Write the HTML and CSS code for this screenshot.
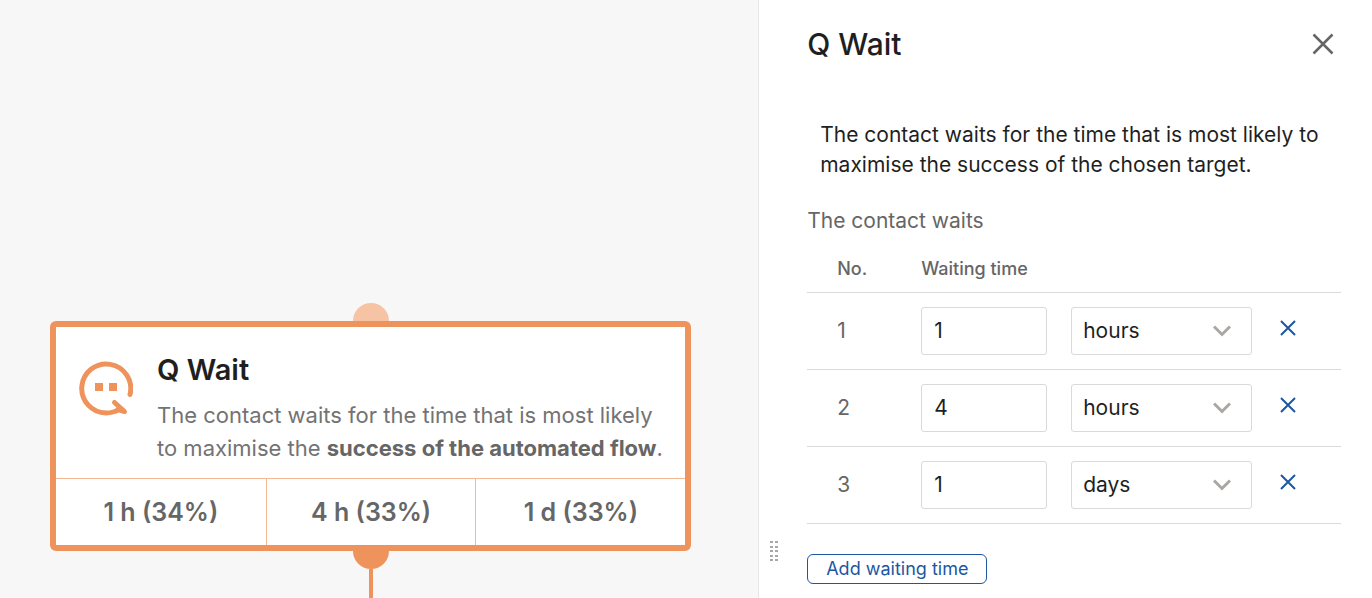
FILE: index.html
```html
<!DOCTYPE html>
<html lang="en">

<head>
    <meta charset="UTF-8">
    <title>Q Wait</title>
    <link rel="stylesheet" href="styles.css">
</head>

<body>
    <div class="editor">
        <!-- flow canvas with the selected node -->
        <main class="canvas">
            <div class="port port-in"></div>
            <section class="node">
                <div class="node-main">
                    <svg class="node-icon" viewBox="0 0 54 56" fill="none" stroke="#ee935c" stroke-width="5" stroke-linecap="round" stroke-linejoin="round">
                        <path d="M51 33.500A24.500 24.500 0 1 0 27 52C32 52 37 50.500 41 48" />
                        <path d="M35.500 41.500L45.500 50.500L39 48.500" />
                        <path d="M16 22h8v8h-8zM30 22h8v8h-8z" fill="#ee935c" stroke="none" />
                    </svg>
                    <div>
                        <h2>Q Wait</h2>
                        <p>The contact waits for the time that is most likely to maximise the <strong>success of the automated flow</strong>.</p>
                    </div>
                </div>
                <div class="node-split">
                    <span>1 h (34%)</span>
                    <span>4 h (33%)</span>
                    <span>1 d (33%)</span>
                </div>
            </section>
            <div class="port port-out"></div>
            <div class="wire"></div>
        </main>

        <!-- settings of the selected node -->
        <aside class="panel">
            <div class="gutter">
                <button type="button" class="grip" aria-label="Resize panel">
                    <svg width="8" height="21" viewBox="0 0 8 21" fill="#aaa6a4">
                        <path d="M0 0h3v2H0zM5 0h3v2H5zM0 5h3v2H0zM5 5h3v2H5zM0 9h3v2H0zM5 9h3v2H5zM0 14h3v2H0zM5 14h3v2H5zM0 18h3v2H0zM5 18h3v2H5z" />
                    </svg>
                </button>
            </div>
            <div class="settings">
                <header class="panel-header">
                    <h1>Q Wait</h1>
                    <button type="button" class="close" aria-label="Close">
                        <svg width="22" height="22" viewBox="0 0 22 22" stroke="#666" stroke-width="2.500"><path d="M1.500 1.500l19 19M20.500 1.500l-19 19" /></svg>
                    </button>
                </header>
                <p class="intro">The contact waits for the time that is most likely to maximise the success of the chosen target.</p>
                <h3>The contact waits</h3>
                <table>
                    <thead>
                        <tr>
                            <th class="col-no">No.</th>
                            <th class="col-value">Waiting time</th>
                            <th class="col-unit"></th>
                            <th></th>
                        </tr>
                    </thead>
                    <tbody>
                        <tr>
                            <td class="col-no">1</td>
                            <td><input type="text" value="1" aria-label="Waiting time 1"></td>
                            <td>
                                <div class="select">
                                    <select aria-label="Unit 1"><option>hours</option><option>days</option></select>
                                    <svg width="18" height="12" viewBox="0 0 18 12" fill="none" stroke="#aaa6a4" stroke-width="3"><path d="M1 1.500l8 8 8-8" /></svg>
                                </div>
                            </td>
                            <td><button type="button" class="remove" aria-label="Remove waiting time 1"><svg width="16" height="16" viewBox="0 0 16 16" stroke="#1c57a0" stroke-width="2"><path d="M1 1l14 14M15 1L1 15" /></svg></button></td>
                        </tr>
                        <tr>
                            <td class="col-no">2</td>
                            <td><input type="text" value="4" aria-label="Waiting time 2"></td>
                            <td>
                                <div class="select">
                                    <select aria-label="Unit 2"><option>hours</option><option>days</option></select>
                                    <svg width="18" height="12" viewBox="0 0 18 12" fill="none" stroke="#aaa6a4" stroke-width="3"><path d="M1 1.500l8 8 8-8" /></svg>
                                </div>
                            </td>
                            <td><button type="button" class="remove" aria-label="Remove waiting time 2"><svg width="16" height="16" viewBox="0 0 16 16" stroke="#1c57a0" stroke-width="2"><path d="M1 1l14 14M15 1L1 15" /></svg></button></td>
                        </tr>
                        <tr>
                            <td class="col-no">3</td>
                            <td><input type="text" value="1" aria-label="Waiting time 3"></td>
                            <td>
                                <div class="select">
                                    <select aria-label="Unit 3"><option>hours</option><option selected>days</option></select>
                                    <svg width="18" height="12" viewBox="0 0 18 12" fill="none" stroke="#aaa6a4" stroke-width="3"><path d="M1 1.500l8 8 8-8" /></svg>
                                </div>
                            </td>
                            <td><button type="button" class="remove" aria-label="Remove waiting time 3"><svg width="16" height="16" viewBox="0 0 16 16" stroke="#1c57a0" stroke-width="2"><path d="M1 1l14 14M15 1L1 15" /></svg></button></td>
                        </tr>
                    </tbody>
                </table>
                <button type="button" class="add">Add waiting time</button>
            </div>
        </aside>
    </div>
</body>

</html>
```
FILE: styles.css
```css
* {
    box-sizing: border-box;
}

body {
    margin: 0;
    color: #1f1f1f;
    font-family: Inter, "Liberation Sans", sans-serif;
    font-size: 21px;
}

h1, h2, h3, p {
    margin: 0;
}

button {
    background: none;
    border: 0;
    padding: 0;
    font-family: inherit;
    cursor: pointer;
}

svg {
    display: block;
}

.editor {
    display: grid;
    grid-template-columns: minmax(0, 21fr) minmax(0, 17fr);
    min-height: 100vh;
}

/* canvas */
.canvas {
    display: flex;
    flex-direction: column;
    align-items: center;
    background-color: #f7f7f7;
    padding: 303px 67px 0 50px;
}

.port {
    width: 36px;
    height: 18px;
}

.port-in {
    background-color: #f6c3a4;
    border-radius: 18px 18px 0 0;
}

.port-out {
    background-color: #ee935c;
    border-radius: 0 0 18px 18px;
}

.wire {
    flex: 1;
    width: 4px;
    background-color: #ee935c;
}

.node {
    width: 100%;
    background-color: #fff;
    border: 6px solid #ee935c;
    border-radius: 6px;
}

.node-main {
    display: flex;
    gap: 24px;
    padding: 24px 12px 13px 23px;
}

.node-icon {
    flex: none;
    width: 54px;
    height: 56px;
    margin-top: 10px;
}

.node h2 {
    font-size: 29px;
    font-weight: 600;
    line-height: 38px;
    margin-bottom: 10px;
}

.node p {
    color: #737373;
    font-size: 22px;
    line-height: 33px;
}

.node strong {
    color: #666;
}

.node-split {
    display: grid;
    grid-template-columns: repeat(3, 1fr);
    border-top: 1px solid #f4b994;
}

.node-split span {
    color: #666;
    font-size: 25px;
    font-weight: 600;
    line-height: 66px;
    text-align: center;
}

.node-split span + span {
    border-left: 1px solid #f4b994;
}

/* panel */
.panel {
    display: grid;
    grid-template-columns: 48px minmax(0, 1fr);
    background-color: #fff;
    border-left: 1px solid #e6e6e6;
    padding-right: 31px;
}

.gutter {
    display: flex;
    align-items: flex-end;
    padding: 0 0 36px 11px;
}

.panel-header {
    display: flex;
    align-items: center;
    justify-content: space-between;
    padding-top: 24px;
}

h1 {
    font-size: 30px;
    font-weight: 500;
    line-height: 40px;
}

.close {
    padding: 7px;
}

.intro {
    line-height: 30px;
    padding: 56px 0 0 13px;
}

h3 {
    color: #666;
    font-size: 21px;
    font-weight: 400;
    line-height: 30px;
    margin-top: 26px;
}

table {
    width: 100%;
    table-layout: fixed;
    border-collapse: collapse;
    color: #666;
}

th {
    height: 56px;
    padding: 10px 0 0;
    border-bottom: 1px solid #dadada;
    font-size: 18px;
    font-weight: 500;
    text-align: left;
}

td {
    height: 77px;
    padding: 0;
    border-bottom: 1px solid #dadada;
}

.col-no {
    width: 114px;
    padding-left: 30px;
}

.col-value {
    width: 150px;
}

.col-unit {
    width: 209px;
}

input,
select {
    display: block;
    height: 48px;
    background-color: #fff;
    border: 1px solid #dadada;
    border-radius: 3px;
    padding: 0 12px;
    color: #1f1f1f;
    font-family: inherit;
    font-size: 21px;
}

input {
    width: 126px;
}

select {
    width: 181px;
    padding: 0 11px;
    appearance: none;
}

.select {
    display: grid;
    width: 181px;
    align-items: center;
}

.select > * {
    grid-area: 1 / 1;
}

.select svg {
    justify-self: end;
    margin-right: 21px;
    pointer-events: none;
}

.remove {
    padding-bottom: 10px;
}

.add {
    height: 30px;
    margin-top: 30px;
    padding: 0 18px;
    border: 1px solid #1c57a0;
    border-radius: 6px;
    color: #1c57a0;
    font-size: 18px;
}
```
